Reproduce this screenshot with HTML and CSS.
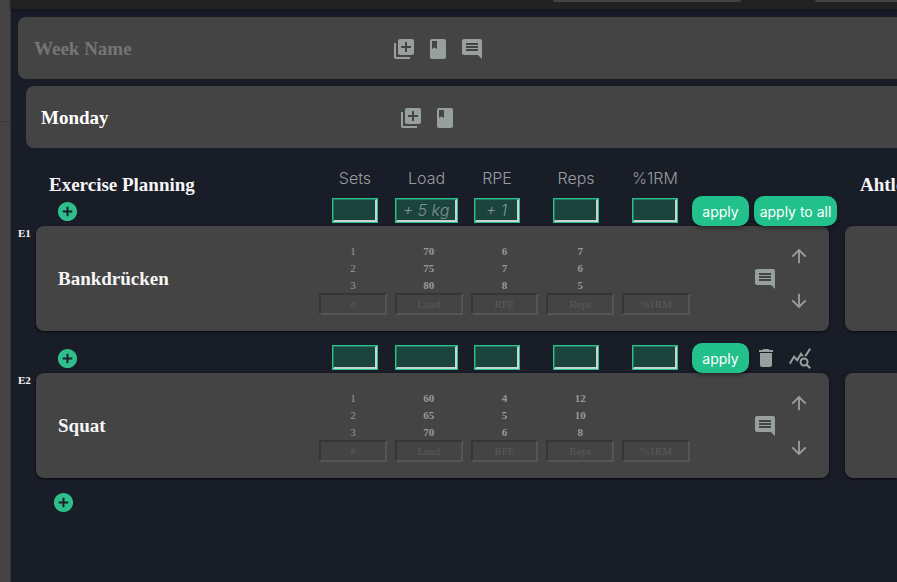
FILE: index.html
```html
<!DOCTYPE html>
<html lang="en">
    <head>
        <meta charset="UTF-8" />
        <meta name="viewport" content="width=device-width, initial-scale=1.0" />
        <title>Training Plan</title>
        <link rel="stylesheet" href="styles.css">
    </head>

    <body>
        <!-- icons -->
        <svg class="sprite" aria-hidden="true">
            <symbol id="library-add" viewBox="0 0 24 24"><path d="M4 6H2v14c0 1.100.9 2 2 2h14v-2H4V6zm16-4H8c-1.100 0-2 .9-2 2v12c0 1.100.9 2 2 2h12c1.100 0 2-.9 2-2V4c0-1.100-.9-2-2-2zm-1 9h-4v4h-2v-4H9V9h4V5h2v4h4v2z"/></symbol>
            <symbol id="book" viewBox="0 0 24 24"><path d="M18 2H6c-1.100 0-2 .9-2 2v16c0 1.100.9 2 2 2h12c1.100 0 2-.9 2-2V4c0-1.100-.9-2-2-2zM6 4h5v8l-2.500-1.500L6 12V4z"/></symbol>
            <symbol id="comment" viewBox="0 0 24 24"><path d="M21.990 4c0-1.100-.89-2-1.990-2H4c-1.100 0-2 .9-2 2v12c0 1.100.9 2 2 2h14l4 4-.01-18zM18 14H6v-2h12v2zm0-3H6V9h12v2zm0-3H6V6h12v2z"/></symbol>
            <symbol id="add" viewBox="0 0 24 24"><path d="M12 2C6.480 2 2 6.480 2 12s4.480 10 10 10 10-4.480 10-10S17.520 2 12 2zm5 11h-4v4h-2v-4H7v-2h4V7h2v4h4v2z"/></symbol>
            <symbol id="up" viewBox="0 0 24 24"><path d="M4 12l1.410 1.410L11 7.830V20h2V7.830l5.580 5.590L20 12l-8-8-8 8z"/></symbol>
            <symbol id="down" viewBox="0 0 24 24"><path d="M20 12l-1.410-1.410L13 16.170V4h-2v12.170l-5.580-5.590L4 12l8 8 8-8z"/></symbol>
            <symbol id="delete" viewBox="0 0 24 24"><path d="M6 19c0 1.100.9 2 2 2h8c1.100 0 2-.9 2-2V7H6v12zM19 4h-3.500l-1-1h-5l-1 1H5v2h14V4z"/></symbol>
            <symbol id="stats" viewBox="0 0 24 24"><path d="M19.880 18.470c.44-.7.700-1.510.700-2.390 0-2.490-2.010-4.500-4.500-4.500s-4.500 2.010-4.500 4.500 2.010 4.500 4.490 4.500c.88 0 1.700-.26 2.390-.7L21.580 23 23 21.580l-3.120-3.110zm-3.800.110c-1.380 0-2.500-1.120-2.500-2.500s1.120-2.500 2.500-2.500 2.500 1.120 2.500 2.500-1.120 2.500-2.500 2.500zm-.36-8.500c-.74.020-1.450.180-2.100.450l-.55-.83-3.800 6.180-3.010-3.520-3.630 5.810L1 17l5-8 3 3.500L13 6l2.720 4.080zm2.590.5c-.64-.28-1.330-.45-2.050-.49L21.380 2 23 3.180l-4.690 7.400z"/></symbol>
        </svg>

        <aside class="sidebar"><hr></aside>

        <div class="page">
            <header class="topbar">
                <span class="tab"></span>
                <span class="tab"></span>
            </header>

            <main>
                <section class="bar week">
                    <input class="title" type="text" placeholder="Week Name" aria-label="Week Name">
                    <button class="icon" aria-label="Add day"><svg><use href="#library-add"/></svg></button>
                    <button class="icon" aria-label="Templates"><svg><use href="#book"/></svg></button>
                    <button class="icon" aria-label="Comment"><svg><use href="#comment"/></svg></button>
                </section>

                <section class="bar day">
                    <input class="title" type="text" value="Monday" aria-label="Day name">
                    <button class="icon" aria-label="Add exercise"><svg><use href="#library-add"/></svg></button>
                    <button class="icon" aria-label="Templates"><svg><use href="#book"/></svg></button>
                </section>

                <div class="row plan-head">
                    <div class="toolbar">
                        <h2>Exercise Planning</h2>
                        <div class="params">
                            <label for="sets1">Sets</label>
                            <label for="load1">Load</label>
                            <label for="rpe1">RPE</label>
                            <label for="reps1">Reps</label>
                            <label for="rm1">%1RM</label>
                        </div>
                    </div>
                    <h2 class="athlete-title">Ahtlete</h2>
                </div>

                <section class="row exercise">
                    <div class="toolbar">
                        <button class="icon add" aria-label="Insert exercise"><svg><use href="#add"/></svg></button>
                        <div class="params">
                            <input id="sets1" type="text">
                            <input id="load1" class="wide" type="text" placeholder="+ 5 kg">
                            <input id="rpe1" type="text" placeholder="+ 1">
                            <input id="reps1" type="text">
                            <input id="rm1" type="text">
                        </div>
                        <div class="tools">
                            <button class="apply">apply</button>
                            <button class="apply all">apply to all</button>
                        </div>
                    </div>
                    <span class="number">E1</span>
                    <div class="card">
                        <h2>Bankdrücken</h2>
                        <table>
                            <tbody>
                                <tr><td>1</td><td>70</td><td>6</td><td>7</td><td></td></tr>
                                <tr><td>2</td><td>75</td><td>7</td><td>6</td><td></td></tr>
                                <tr><td>3</td><td>80</td><td>8</td><td>5</td><td></td></tr>
                            </tbody>
                            <tfoot>
                                <tr>
                                    <td><input type="text" placeholder="#" aria-label="Set"></td>
                                    <td><input type="text" placeholder="Load" aria-label="Load"></td>
                                    <td><input type="text" placeholder="RPE" aria-label="RPE"></td>
                                    <td><input type="text" placeholder="Reps" aria-label="Reps"></td>
                                    <td><input type="text" placeholder="%1RM" aria-label="%1RM"></td>
                                </tr>
                            </tfoot>
                        </table>
                        <div class="card-tools">
                            <button class="icon" aria-label="Comment"><svg><use href="#comment"/></svg></button>
                            <div class="move">
                                <button class="icon" aria-label="Move up"><svg><use href="#up"/></svg></button>
                                <button class="icon" aria-label="Move down"><svg><use href="#down"/></svg></button>
                            </div>
                        </div>
                    </div>
                    <div class="card athlete"></div>
                </section>

                <section class="row exercise">
                    <div class="toolbar">
                        <button class="icon add" aria-label="Insert exercise"><svg><use href="#add"/></svg></button>
                        <div class="params">
                            <input type="text" aria-label="Sets">
                            <input class="wide" type="text" aria-label="Load">
                            <input type="text" aria-label="RPE">
                            <input type="text" aria-label="Reps">
                            <input type="text" aria-label="%1RM">
                        </div>
                        <div class="tools">
                            <button class="apply">apply</button>
                            <button class="icon" aria-label="Delete"><svg><use href="#delete"/></svg></button>
                            <button class="icon" aria-label="Statistics"><svg><use href="#stats"/></svg></button>
                        </div>
                    </div>
                    <span class="number">E2</span>
                    <div class="card">
                        <h2>Squat</h2>
                        <table>
                            <tbody>
                                <tr><td>1</td><td>60</td><td>4</td><td>12</td><td></td></tr>
                                <tr><td>2</td><td>65</td><td>5</td><td>10</td><td></td></tr>
                                <tr><td>3</td><td>70</td><td>6</td><td>8</td><td></td></tr>
                            </tbody>
                            <tfoot>
                                <tr>
                                    <td><input type="text" placeholder="#" aria-label="Set"></td>
                                    <td><input type="text" placeholder="Load" aria-label="Load"></td>
                                    <td><input type="text" placeholder="RPE" aria-label="RPE"></td>
                                    <td><input type="text" placeholder="Reps" aria-label="Reps"></td>
                                    <td><input type="text" placeholder="%1RM" aria-label="%1RM"></td>
                                </tr>
                            </tfoot>
                        </table>
                        <div class="card-tools">
                            <button class="icon" aria-label="Comment"><svg><use href="#comment"/></svg></button>
                            <div class="move">
                                <button class="icon" aria-label="Move up"><svg><use href="#up"/></svg></button>
                                <button class="icon" aria-label="Move down"><svg><use href="#down"/></svg></button>
                            </div>
                        </div>
                    </div>
                    <div class="card athlete"></div>
                </section>

                <div class="plan-end">
                    <button class="icon add" aria-label="Add exercise"><svg><use href="#add"/></svg></button>
                </div>
            </main>
        </div>
    </body>
</html>
```

FILE: styles.css
```css
* {
    margin: 0;
    padding: 0;
    box-sizing: border-box;
}

body {
    display: flex;
    min-height: 100vh;
    overflow: hidden;
    background-color: #191d28;
    color: #f5f5f5;
    font-family: "Liberation Serif", serif;
}

button {
    border: none;
    background: none;
    cursor: pointer;
}

h2 {
    font-size: 19px;
    line-height: 22px;
    white-space: nowrap;
}

.sprite {
    position: absolute;
    width: 0;
    height: 0;
}

.sidebar {
    flex: none;
    width: 11px;
    padding-top: 121px;
    background-color: #444;
    border-right: 1px solid #333;
}

.sidebar hr {
    border: none;
    border-top: 1px solid #3a3a3a;
}

.page {
    flex: 1;
    min-width: 0;
}

/* top bar */
.topbar {
    display: flex;
    justify-content: flex-end;
    gap: 74px;
    height: 9px;
    background-color: #222;
    box-shadow: 0 1px 4px rgba(0, 0, 0, 0.4);
}

.tab {
    width: 188px;
    height: 2px;
    background-color: #444;
    border-radius: 0 0 5px 5px;
}

.tab:last-child {
    width: 82px;
    border-radius: 0 0 0 5px;
}

main {
    padding: 8px 0 0 7px;
}

/* week and day */
.bar {
    display: flex;
    align-items: center;
    height: 62px;
    padding: 2px 0 0 16px;
    background-color: #444;
    border-radius: 8px 0 0 8px;
}

.day {
    margin: 7px 0 0 8px;
    padding-left: 15px;
}

.title {
    width: 353px;
    border: none;
    background: none;
    color: #fff;
    font-family: inherit;
    font-size: 19px;
    font-weight: bold;
}

.title::placeholder {
    color: #757575;
}

.icon {
    display: flex;
    align-items: center;
    justify-content: center;
    width: 34px;
    height: 28px;
    color: #97a09c;
}

.icon svg {
    width: 24px;
    height: 24px;
    fill: currentColor;
}

.add {
    color: #2ebf8b;
}

.add svg {
    width: 23px;
    height: 23px;
}

/* plan */
.row {
    display: grid;
    grid-template-columns: 18px minmax(0, 1fr) 52px;
}

.plan-head {
    height: 48px;
    align-items: end;
}

.toolbar {
    position: relative;
    z-index: 1;
    grid-column: 2;
    display: grid;
    grid-template-columns: 1fr 371px 139px;
    align-items: center;
    margin-right: 16px;
}

.plan-head .toolbar {
    align-items: end;
}

.plan-head h2 {
    padding-left: 13px;
}

.plan-head .athlete-title {
    padding-left: 15px;
    overflow: hidden;
}

.plan-head .params {
    padding-bottom: 8px;
}

.toolbar > .add {
    margin-left: 14px;
}

.params {
    display: grid;
    grid-template-columns: 72px 71px 70px 88px 70px;
    justify-items: center;
    padding-bottom: 1px;
    color: #999c9f;
    font: 300 16px/20px Inter, sans-serif;
}

.params input {
    width: 44px;
    height: 23px;
    margin: 1px;
    border-style: solid;
    border-width: 1px 2px 2px 1px;
    border-color: #257a60 #ccd2cf #ccd2cf #257a60;
    box-shadow: 0 0 0 1px #22c38d;
    background-color: #1b443e;
    color: #fff;
    font: italic 300 16px/20px Inter, sans-serif;
    text-align: center;
}

.params .wide {
    width: 61px;
}

.params input::placeholder {
    color: #83928f;
}

.tools {
    display: flex;
    align-items: center;
    padding-left: 2px;
}

.apply {
    flex: none;
    width: 57px;
    height: 30px;
    border-radius: 10px;
    background-color: #22c08b;
    box-shadow: 0 2px 4px rgba(0, 0, 0, 0.4);
    color: #fff;
    font: 14px Inter, sans-serif;
    white-space: nowrap;
}

.all {
    width: 83px;
    margin-left: 5px;
}

.exercise {
    margin-bottom: 12px;
}

.exercise .toolbar {
    height: 30px;
}

.number {
    grid-column: 1;
    font-size: 11px;
    font-weight: bold;
    line-height: 15px;
}

.card {
    display: grid;
    grid-template-columns: 1fr 379px 135px;
    align-items: center;
    margin-right: 16px;
    padding: 16px 0;
    background-color: #444;
    border-radius: 8px;
    box-shadow: 0 1px 3px rgba(0, 0, 0, 0.7);
}

.card h2 {
    padding-left: 22px;
}

.athlete {
    margin-right: 0;
    border-radius: 8px 0 0 8px;
}

table {
    width: 100%;
    table-layout: fixed;
    border-collapse: collapse;
}

td {
    height: 17px;
    padding: 0 4px;
    color: #999;
    font-size: 11px;
    font-weight: bold;
    line-height: 16px;
    text-align: center;
}

td:first-child {
    font-weight: normal;
}

td input {
    display: block;
    width: 100%;
    height: 22px;
    border: 2px solid;
    border-color: #363636 #555 #555 #363636;
    background: none;
    color: #999;
    font-family: inherit;
    font-size: 11px;
    text-align: center;
}

td input::placeholder {
    color: #5a5a5a;
}

.card-tools {
    display: flex;
    align-items: center;
    padding-left: 54px;
}

.move {
    display: grid;
    gap: 17px;
}

.move svg {
    width: 22px;
    height: 22px;
}

.exercise:nth-last-child(2) {
    margin-bottom: 10px;
}
.plan-end {
    padding: 0 28px;
}
```
